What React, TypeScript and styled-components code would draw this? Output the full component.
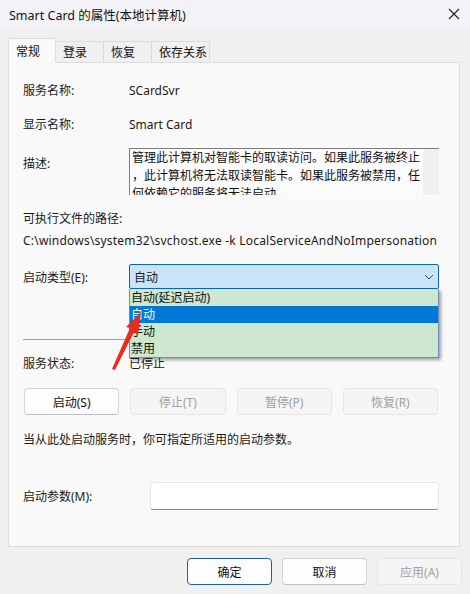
import React from "react";
import styled, { createGlobalStyle } from "styled-components";

const Global = createGlobalStyle`
  html, body { margin: 0; padding: 0; background: #f0f0f0; }
  * { box-sizing: border-box; }
`;

const Window = styled.div`
  width: 470px;
  height: 594px;
  background: #f0f0f0;
  display: flex;
  flex-direction: column;
  font-family: "Segoe UI", "Noto Sans", "Noto Sans CJK SC", sans-serif;
  font-size: 12px;
  color: #1a1a1a;
  overflow: hidden;
`;

const TitleBar = styled.div`
  height: 28px;
  background: #f3f3f7;
  display: flex;
  align-items: center;
  justify-content: space-between;
  padding: 0 10px 0 9px;
`;

const Title = styled.div`
  font-size: 12.5px;
  color: #111;
`;

const Close = styled.div`
  width: 12px;
  height: 12px;
  display: flex;
`;

const Body = styled.div`
  padding: 10px 10px 0 8px;
  display: flex;
  flex-direction: column;
`;

const TabBar = styled.div`
  display: flex;
  align-items: flex-end;
  height: 25px;
  position: relative;
  z-index: 1;
  margin-bottom: -1px;
`;

const Tab = styled.div<{ $active?: boolean; $w: number }>`
  width: ${(p) => p.$w}px;
  height: ${(p) => (p.$active ? 25 : 22)}px;
  background: ${(p) => (p.$active ? "#f9f9f9" : "#f0f0f0")};
  border: 1px solid #dcdcdc;
  border-bottom: ${(p) => (p.$active ? "1px solid #f9f9f9" : "1px solid #dcdcdc")};
  border-left: ${(p) => (p.$active ? "1px solid #dcdcdc" : "none")};
  padding-left: 7px;
  display: flex;
  align-items: center;
  color: #111;
`;

const Panel = styled.div`
  position: relative;
  height: 485px;
  background: #f9f9f9;
  border: 1px solid #dcdcdc;
  padding: 19px 20px 0 14px;
  display: flex;
  flex-direction: column;
`;

const Row = styled.div<{ $mt: number; $h?: number }>`
  display: flex;
  align-items: center;
  margin-top: ${(p) => p.$mt}px;
  height: ${(p) => (p.$h ? `${p.$h}px` : "16px")};
  white-space: nowrap;
`;

const Label = styled.div<{ $w?: number }>`
  width: ${(p) => p.$w ?? 106}px;
  flex-shrink: 0;
`;

const Value = styled.div<{ $spread?: boolean }>`
  letter-spacing: ${(p) => (p.$spread ? "0.21px" : "normal")};
`;

const DescRow = styled.div`
  display: flex;
  margin-top: 16px;
  height: 47px;
`;

const DescLabel = styled.div`
  width: 106px;
  padding-top: 6px;
`;

const DescBox = styled.div`
  flex: 1;
  display: flex;
  border-top: 1px solid #7d7d7d;
  border-left: 1px solid #7d7d7d;
  background: #fbfbfb;
  overflow: hidden;
`;

const DescText = styled.div`
  flex: 1;
  padding: 0 0 0 2px;
  line-height: 18px;
  font-size: 12px;
  white-space: nowrap;
  color: #111;
`;

const ScrollStrip = styled.div`
  width: 16px;
  background: #efefef;
`;

const ComboWrap = styled.div`
  position: relative;
  flex: 1;
  height: 25px;
`;

const Combo = styled.div`
  height: 25px;
  background: #cce4f7;
  border: 1px solid #0a66bc;
  border-radius: 2px;
  display: flex;
  align-items: center;
  justify-content: space-between;
  padding: 0 4px 0 4px;
`;

const DropList = styled.div`
  position: absolute;
  left: 0;
  right: 0;
  top: 25px;
  background: #cde8cf;
  border: 1px solid #6b8cc4;
  border-top: none;
  box-shadow: 2px 2px 3px rgba(0, 0, 0, 0.35);
  z-index: 5;
`;

const DropItem = styled.div<{ $selected?: boolean }>`
  height: 17px;
  line-height: 17px;
  padding-left: 1px;
  background: ${(p) => (p.$selected ? "#0078d7" : "transparent")};
  color: ${(p) => (p.$selected ? "#ffffff" : "#111")};
`;

const Separator = styled.div`
  height: 1px;
  background: #a0a0a0;
  margin-top: 50px;
`;

const ButtonRow = styled.div`
  display: grid;
  grid-template-columns: repeat(4, 1fr);
  column-gap: 11px;
  margin-top: 17px;
  padding-left: 1px;
  padding-right: 1px;
`;

const Btn = styled.div<{ $disabled?: boolean; $primary?: boolean; $w?: number }>`
  height: 27px;
  ${(p) => (p.$w ? `width: ${p.$w}px;` : "")}
  display: flex;
  align-items: center;
  justify-content: center;
  border-radius: 4px;
  background: ${(p) => (p.$disabled ? "#f5f5f5" : "#fdfdfd")};
  border: 1px solid
    ${(p) => (p.$primary ? "#1f5fa8" : p.$disabled ? "#e5e5e5" : "#d3d3d3")};
  border-bottom-color: ${(p) =>
    p.$primary ? "#1f5fa8" : p.$disabled ? "#e5e5e5" : "#c0c0c0"};
  color: ${(p) => (p.$disabled ? "#a0a0a0" : "#111")};
`;

const Note = styled.div`
  margin-top: 17px;
  height: 16px;
  line-height: 16px;
  white-space: nowrap;
`;

const ParamInput = styled.div`
  flex: 1;
  height: 28px;
  background: #ffffff;
  border: 1px solid #e6e6e6;
  border-bottom: 1px solid #8a8a8a;
  border-radius: 3px;
`;

const Arrow = styled.svg`
  position: absolute;
  left: 87px;
  top: 243px;
  z-index: 6;
`;

const Footer = styled.div`
  display: flex;
  justify-content: flex-end;
  gap: 10px;
  padding: 11px 0 0 0;
  margin-right: -2px;
`;

export default function App() {
  const desc = [
    "管理此计算机对智能卡的取读访问。如果此服务被终止",
    "，此计算机将无法取读智能卡。如果此服务被禁用，任",
    "何依赖它的服务将无法启动。",
  ];
  return (
    <>
      <Global />
      <Window>
        <TitleBar>
          <Title>Smart Card 的属性(本地计算机)</Title>
          <Close>
            <svg width="12" height="12" viewBox="0 0 12 12">
              <path d="M1 1 L11 11 M11 1 L1 11" stroke="#222" strokeWidth="1.1" fill="none" />
            </svg>
          </Close>
        </TitleBar>
        <Body>
          <TabBar>
            <Tab $active $w={48}>常规</Tab>
            <Tab $w={48}>登录</Tab>
            <Tab $w={48}>恢复</Tab>
            <Tab $w={58}>依存关系</Tab>
          </TabBar>
          <Panel>
            <Row $mt={0}>
              <Label>服务名称:</Label>
              <Value>SCardSvr</Value>
            </Row>
            <Row $mt={18}>
              <Label>显示名称:</Label>
              <Value>Smart Card</Value>
            </Row>
            <DescRow>
              <DescLabel>描述:</DescLabel>
              <DescBox>
                <DescText>
                  {desc.map((l) => (
                    <div key={l}>{l}</div>
                  ))}
                </DescText>
                <ScrollStrip />
              </DescBox>
            </DescRow>
            <Row $mt={15}>
              <Label $w={200}>可执行文件的路径:</Label>
            </Row>
            <Row $mt={6}>
              <Value $spread>{"C:\\windows\\system32\\svchost.exe -k LocalServiceAndNoImpersonation"}</Value>
            </Row>
            <Row $mt={16} $h={25}>
              <Label>启动类型(E):</Label>
              <ComboWrap>
                <Combo>
                  <span>自动</span>
                  <svg width="10" height="6" viewBox="0 0 10 6">
                    <path d="M1 1 L5 5 L9 1" stroke="#444" strokeWidth="1" fill="none" />
                  </svg>
                </Combo>
                <DropList>
                  <DropItem>自动(延迟启动)</DropItem>
                  <DropItem $selected>自动</DropItem>
                  <DropItem>手动</DropItem>
                  <DropItem>禁用</DropItem>
                </DropList>
              </ComboWrap>
            </Row>
            <Separator />
            <Row $mt={15}>
              <Label>服务状态:</Label>
              <Value>已停止</Value>
            </Row>
            <ButtonRow>
              <Btn>启动(S)</Btn>
              <Btn $disabled>停止(T)</Btn>
              <Btn $disabled>暂停(P)</Btn>
              <Btn $disabled>恢复(R)</Btn>
            </ButtonRow>
            <Note>当从此处启动服务时，你可指定所适用的启动参数。</Note>
            <Row $mt={34} $h={28}>
              <Label $w={127}>启动参数(M):</Label>
              <ParamInput />
            </Row>
            <Arrow width="45" height="70" viewBox="87 243 45 70">
              <path
                d="M132 249 L117 264 L121 265 L103 306 L106 307 L125 269 L129 272 Z"
                fill="#ee2a1b"
              />
            </Arrow>
          </Panel>
          <Footer>
            <Btn $primary $w={85}>确定</Btn>
            <Btn $w={85}>取消</Btn>
            <Btn $disabled $w={85}>应用(A)</Btn>
          </Footer>
        </Body>
      </Window>
    </>
  );
}
